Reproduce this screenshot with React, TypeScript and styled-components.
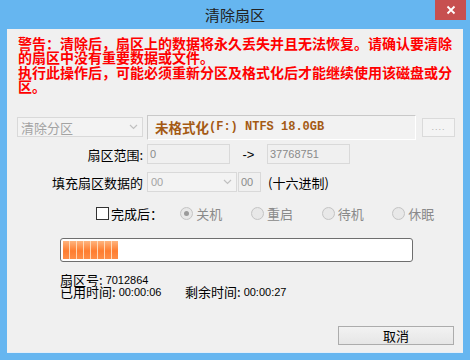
import styled, { createGlobalStyle } from 'styled-components';

const GlobalStyle = createGlobalStyle`
  html, body {
    margin: 0;
    padding: 0;
    overflow: hidden;
  }
  body {
    font-family: "Liberation Sans", "Noto Sans CJK SC", sans-serif;
    font-size: 13px;
    color: #000;
  }
`;

const Window = styled.div`
  width: 470px;
  height: 360px;
  background: #66b6f0;
  display: flex;
  flex-direction: column;
  align-items: center;
`;

const TitleBar = styled.div`
  position: relative;
  width: 100%;
  height: 29px;
  display: flex;
  align-items: center;
  justify-content: center;
`;

const Title = styled.div`
  font-family: "Noto Sans CJK SC", sans-serif;
  font-size: 15px;
  color: #222;
  margin-top: -1px;
`;

const CloseButton = styled.div`
  position: absolute;
  top: 0;
  right: 4px;
  width: 31px;
  height: 20px;
  background: #c75050;
  display: flex;
  align-items: center;
  justify-content: center;
`;

const Content = styled.div`
  width: 456px;
  height: 324px;
  background: #f0f0f0;
  display: flex;
  flex-direction: column;
  box-sizing: border-box;
  border-bottom: 1px solid #e4eef8;
`;

const Warning = styled.div`
  height: 78px;
  box-sizing: border-box;
  padding: 7px 0 0 11px;
  font-family: "Noto Sans CJK SC", sans-serif;
  font-weight: 700;
  font-size: 14px;
  line-height: 14.4px;
  color: #ff0000;
  white-space: nowrap;
`;

const Row = styled.div<{ top: number; h: number; left?: number }>`
  margin-top: ${({ top }) => top}px;
  height: ${({ h }) => h}px;
  padding-left: ${({ left }) => left ?? 10}px;
  display: flex;
  align-items: center;
`;

const Combo = styled.div<{ w: number; h?: number }>`
  width: ${({ w }) => w}px;
  height: ${({ h }) => h ?? 20}px;
  box-sizing: border-box;
  border: 1px solid #d9d9d9;
  background: #f3f3f3;
  color: #a3a3a3;
  display: flex;
  align-items: center;
  justify-content: space-between;
  padding: 0 4px 0 3px;
`;

const ComboText = styled.span<{ latin?: boolean }>`
  font-family: ${({ latin }) =>
    latin ? '"Liberation Sans", sans-serif' : '"Noto Sans CJK SC", sans-serif'};
  font-size: ${({ latin }) => (latin ? 11 : 13)}px;
`;

const DiskPanel = styled.div`
  margin-left: 4px;
  width: 269px;
  height: 25px;
  box-sizing: border-box;
  border-top: 1px solid #c9c9c9;
  border-left: 1px solid #c9c9c9;
  border-right: 1px solid #ffffff;
  border-bottom: 1px solid #ffffff;
  background: #f2f2f2;
  display: flex;
  align-items: center;
  padding-left: 7px;
  color: #a45a14;
  font-weight: 700;
`;

const DiskCjk = styled.span`
  font-family: "Noto Sans CJK SC", sans-serif;
  font-size: 13.5px;
`;

const DiskLatin = styled.span`
  font-family: "Liberation Mono", monospace;
  font-size: 12px;
  white-space: pre;
`;

const DotsButton = styled.div`
  margin-left: 6px;
  width: 33px;
  height: 19px;
  box-sizing: border-box;
  border: 1px solid #dadada;
  background: #f4f4f4;
  color: #b0b0b0;
  font-size: 9px;
  letter-spacing: 1px;
  display: flex;
  align-items: center;
  justify-content: center;
`;

const Label = styled.div`
  width: 126px;
  text-align: right;
  font-family: "Noto Sans CJK SC", sans-serif;
  font-size: 13px;
  margin-right: 4px;
`;

const Input = styled.div<{ w: number; ml?: number }>`
  width: ${({ w }) => w}px;
  height: 20px;
  margin-left: ${({ ml }) => ml ?? 0}px;
  box-sizing: border-box;
  border: 1px solid #d9d9d9;
  background: #f0f0f0;
  color: #8a8a8a;
  font-size: 11px;
  display: flex;
  align-items: center;
  padding-left: 2px;
`;

const Arrow = styled.span`
  width: 37px;
  text-align: center;
  font-size: 13px;
`;

const Hint = styled.span`
  margin-left: 7px;
  font-family: "Noto Sans CJK SC", sans-serif;
  font-size: 13px;
`;

const CheckGroup = styled.div`
  width: 87px;
  display: flex;
  align-items: center;
`;

const CheckBox = styled.div`
  width: 13px;
  height: 13px;
  box-sizing: border-box;
  border: 1px solid #333;
  background: #fff;
  margin-right: 2px;
`;

const Text = styled.span<{ dim?: boolean }>`
  font-family: "Noto Sans CJK SC", sans-serif;
  font-size: 13px;
  color: ${({ dim }) => (dim ? '#8a8a8a' : '#000')};
`;

const RadioItem = styled.div`
  width: 73px;
  display: flex;
  align-items: center;
`;

const Radio = styled.div<{ checked?: boolean }>`
  width: 13px;
  height: 13px;
  box-sizing: border-box;
  border-radius: 50%;
  border: 1px solid #c4c4c4;
  background: radial-gradient(circle, #e8e8e8 0 60%, #dcdcdc 100%);
  margin-right: 3px;
  display: flex;
  align-items: center;
  justify-content: center;
  &::after {
    content: '';
    display: ${({ checked }) => (checked ? 'block' : 'none')};
    width: 5px;
    height: 5px;
    border-radius: 50%;
    background: #9a9a9a;
  }
`;

const Progress = styled.div`
  margin: 18px 0 0 53px;
  width: 353px;
  height: 24px;
  box-sizing: border-box;
  border: 1px solid #6e6e6e;
  border-radius: 3px;
  background: #fff;
  padding: 2px;
`;

const ProgressFill = styled.div<{ w: number }>`
  width: ${({ w }) => w}px;
  height: 100%;
  background:
    repeating-linear-gradient(90deg, transparent 0 6px, rgba(255, 228, 200, 0.85) 6px 7px),
    linear-gradient(#ffb47e, #ff7d30 55%, #ff8e48);
`;

const Stats = styled.div`
  margin: 12px 0 0 53px;
  display: flex;
  flex-direction: column;
  line-height: 12px;
`;

const StatLine = styled.div`
  display: flex;
  align-items: center;
  height: 12px;
`;

const StatCell = styled.span<{ w?: number }>`
  width: ${({ w }) => (w ? `${w}px` : 'auto')};
  display: flex;
  align-items: center;
  white-space: nowrap;
`;

const Num = styled.span`
  font-family: "Liberation Sans", sans-serif;
  font-size: 11px;
  margin-left: 3px;
`;

const ButtonRow = styled.div`
  margin-top: 28px;
  display: flex;
  justify-content: flex-end;
  padding-right: 9px;
`;

const Button = styled.div`
  width: 116px;
  height: 19px;
  box-sizing: border-box;
  border: 1px solid #acacac;
  background: linear-gradient(#f2f2f2, #e6e6e6);
  display: flex;
  align-items: center;
  justify-content: center;
  font-family: "Noto Sans CJK SC", sans-serif;
  font-size: 13px;
`;

const Chevron = () => (
  <svg width="9" height="6" viewBox="0 0 9 6">
    <path d="M1 1 L4.5 4.5 L8 1" fill="none" stroke="#c0c0c0" strokeWidth="1.2" />
  </svg>
);

const App = () => (
  <>
    <GlobalStyle />
    <Window>
      <TitleBar>
        <Title>清除扇区</Title>
        <CloseButton>
          <svg width="10" height="10" viewBox="0 0 10 10">
            <path d="M1.5 1.5 L8.5 8.5 M8.5 1.5 L1.5 8.5" stroke="#fff" strokeWidth="1.8" />
          </svg>
        </CloseButton>
      </TitleBar>
      <Content>
        <Warning>
          警告：清除后，扇区上的数据将永久丢失并且无法恢复。请确认要清除
          <br />
          的扇区中没有重要数据或文件。
          <br />
          执行此操作后，可能必须重新分区及格式化后才能继续使用该磁盘或分
          <br />
          区。
        </Warning>

        <Row top={7} h={26}>
          <Combo w={126}>
            <ComboText>清除分区</ComboText>
            <Chevron />
          </Combo>
          <DiskPanel>
            <DiskCjk>未格式化</DiskCjk>
            <DiskLatin>(F:) NTFS 18.0GB</DiskLatin>
          </DiskPanel>
          <DotsButton>....</DotsButton>
        </Row>

        <Row top={4} h={20}>
          <Label>扇区范围:</Label>
          <Input w={83}>0</Input>
          <Arrow>-&gt;</Arrow>
          <Input w={83}>37768751</Input>
        </Row>

        <Row top={8} h={20}>
          <Label>填充扇区数据的</Label>
          <Combo w={90}>
            <ComboText latin>00</ComboText>
            <Chevron />
          </Combo>
          <Input w={23} ml={1}>00</Input>
          <Hint>(十六进制)</Hint>
        </Row>

        <Row top={14} h={14} left={89}>
          <CheckGroup>
            <CheckBox />
            <Text>完成后：</Text>
          </CheckGroup>
          <RadioItem>
            <Radio checked />
            <Text dim>关机</Text>
          </RadioItem>
          <RadioItem>
            <Radio />
            <Text dim>重启</Text>
          </RadioItem>
          <RadioItem>
            <Radio />
            <Text dim>待机</Text>
          </RadioItem>
          <RadioItem>
            <Radio />
            <Text dim>休眠</Text>
          </RadioItem>
        </Row>

        <Progress>
          <ProgressFill w={55} />
        </Progress>

        <Stats>
          <StatLine>
            <StatCell>
              <Text>扇区号:</Text>
              <Num>7012864</Num>
            </StatCell>
          </StatLine>
          <StatLine>
            <StatCell w={125}>
              <Text>已用时间:</Text>
              <Num>00:00:06</Num>
            </StatCell>
            <StatCell>
              <Text>剩余时间:</Text>
              <Num>00:00:27</Num>
            </StatCell>
          </StatLine>
        </Stats>

        <ButtonRow>
          <Button>取消</Button>
        </ButtonRow>
      </Content>
    </Window>
  </>
);

export default App;
